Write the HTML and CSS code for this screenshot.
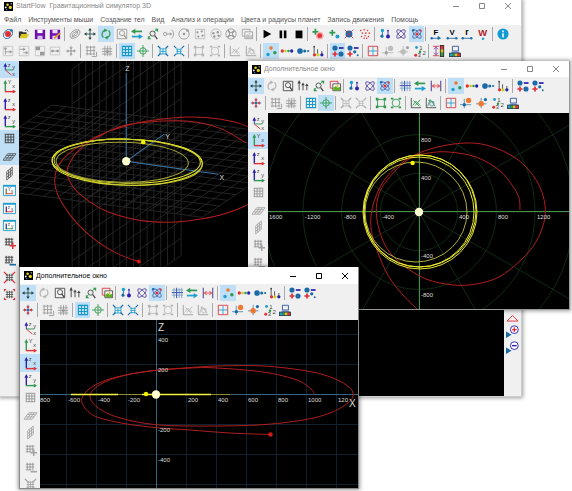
FILE: index.html
```
<!DOCTYPE html>
<html lang="ru">
    <head>
        <meta charset="utf-8">
        <title>StartFlow</title>
        <meta name="viewport" content="width=device-width, initial-scale=1">
        <link rel="stylesheet" href="styles.css">
        <script src="app.js" defer></script>
    </head>
    <body>
        <section class="window main">
            <header class="inactive">
                <svg class="logo"></svg>
                <h1>StartFlow&nbsp; Гравитационный симулятор 3D</h1>
                <div class="controls"></div>
            </header>
            <nav class="menu">
                <button>Файл</button>
                <button>Инструменты мыши</button>
                <button>Создание тел</button>
                <button>Вид</button>
                <button>Анализ и операции</button>
                <button>Цвета и радиусы планет</button>
                <button>Запись движения</button>
                <button>Помощь</button>
            </nav>
            <div class="bars">
                <div class="toolbar" data-tools="planet open save saveas | orbit:off move rotate:on loupe:off swap fit link:off circle:off box4:off ring4:off wheel:off frames:off | play pause stop | addsun addplanet cross cloud | levels atom atomred:on | force speed radius weight | info"></div>
                <div class="toolbar" data-tools="t1:off t2:off t3:off t4:off center:off | grid:off hash:off | gridblue:on target | shrinkbox shrinkring | rect:off round:off | graph:off graph2:off | scatter:on row3 row2 sticks | sizes:on sizes2 | quad axisbig:off axissmall:off nums | ruler palette"></div>
            </div>
            <div class="work">
                <div class="sidebar" data-tools="zyx:on yx zx zy sgrid:on flat:on wall wyx wzx wzy gridplus gridminus gridin gridout"></div>
                <svg class="plot" id="space" viewBox="20 61 484 335" preserveAspectRatio="xMinYMin slice"></svg>
                <div class="sidebar right" data-tools="camup camplus camminus"></div>
            </div>
        </section>

        <section class="window top">
            <header class="inactive">
                <svg class="logo"></svg>
                <h2>Дополнительное окно</h2>
                <div class="controls"></div>
            </header>
            <div class="bars">
                <div class="toolbar" data-tools="move:on rotate:off loupe arrows3 fit frames | levels atom atomred:on | gridfine swap between | scatter:on row3 row2 sticks | sizes sizes2"></div>
                <div class="toolbar" data-tools="center | grid:off hash:off | gridblue target:on | shrinkbox:off shrinkring:off | rect round | graph graph2 | quad axisbig axissmall nums palette"></div>
            </div>
            <div class="work">
                <div class="sidebar" data-tools="zyx yx:on zx zy sgrid:off flat:off wall:off gridplus:off gridminus:off"></div>
                <svg class="plot" id="polar" viewBox="268 113 301 196" preserveAspectRatio="xMinYMin slice"></svg>
            </div>
        </section>

        <section class="window front">
            <header>
                <svg class="logo"></svg>
                <h2>Дополнительное окно</h2>
                <div class="controls"></div>
            </header>
            <div class="bars">
                <div class="toolbar" data-tools="move:on rotate:off loupe arrows3 fit frames | levels atom atomred:on | gridfine swap between | scatter:on row3 row2 sticks | sizes sizes2"></div>
                <div class="toolbar" data-tools="center | grid:off hash:off | gridblue:on target | shrinkbox shrinkring | rect:off round:off | graph:off graph2:off | quad axisbig axissmall nums palette"></div>
            </div>
            <div class="work">
                <div class="sidebar" data-tools="zyx yx zx:on zy sgrid:off flat:off wall:off gridplus:off gridminus:off gridin:off"></div>
                <svg class="plot" id="side" viewBox="40 320 318 168" preserveAspectRatio="xMinYMin slice"></svg>
            </div>
        </section>
    </body>
</html>
```
FILE: styles.css
```
body {
    position: relative;
    height: 100vh;
    margin: 0;
    overflow: hidden;
    background-color: white;
    font-family: "Liberation Sans", Arial, sans-serif;
    font-size: 7px;
    color: #555;
}

button {
    padding: 0;
    border: 0;
    background: none;
    font: inherit;
    color: inherit;
}

.window {
    position: absolute;
    display: flex;
    flex-direction: column;
    box-sizing: border-box;
    overflow: hidden;
    background-color: #f0f0f0;
    box-shadow: 0 0 4px 1px rgba(0, 0, 0, .4);
}

.main {
    inset: 0 50px 94px 0;
    border-right: 1px solid #ccc;
    border-bottom: 1px solid #ccc;
}

.top {
    inset: 61px 2px 181px 248px;
    border-right: 1px solid #999;
    border-bottom: 1px solid #999;
}

.front {
    inset: 267px 213px 2px 19px;
    border: 1px solid #888;
    border-top: 0;
}

header {
    display: flex;
    align-items: center;
    height: 17px;
    background-color: white;
    color: black;
}

.top header {
    height: 16px;
}

.main header {
    height: 12px;
}

header.inactive {
    color: #888;
}

.logo {
    width: 9px;
    height: 9px;
    margin: 0 3px 0 4px;
    background-color: black;
}

h1,
h2 {
    flex: 1;
    margin: 0;
    font-size: 7px;
    line-height: 10px;
    font-weight: normal;
    white-space: nowrap;
}

.controls {
    display: flex;
}

.controls button {
    width: 26px;
    height: 10px;
}

.controls svg {
    display: block;
    width: 8px;
    height: 8px;
    margin: auto;
    fill: none;
    stroke: currentColor;
}

.menu {
    display: flex;
    gap: 7px;
    height: 13px;
    padding: 1px 4px 0;
    box-sizing: border-box;
    background-color: white;
    white-space: nowrap;
}

.bars {
    flex: none;
    padding-bottom: 1px;
}

.main .bars {
    padding-bottom: 2px;
}

.toolbar {
    display: flex;
    align-items: center;
    height: 17px;
}

.top .toolbar + .toolbar,
.front .toolbar + .toolbar {
    height: 18px;
}

.toolbar .tool {
    width: 16px;
    height: 16px;
}

.toolbar .tool:nth-child(3n) {
    width: 15px;
}

.tool {
    display: flex;
    flex: none;
    align-items: center;
    justify-content: center;
}

.tool svg {
    flex: none;
    width: 12px;
    height: 12px;
    overflow: visible;
    fill: none;
    stroke-width: 1;
}

.tool.off svg {
    filter: grayscale(1);
    opacity: .5;
}

.tool.on {
    background-color: #bfdff7;
}

.sep {
    width: 1px;
    height: 14px;
    margin: 0 2px 0 1px;
    background-color: #a8a8a8;
}

.work {
    display: flex;
    flex: 1;
    min-height: 0;
}

.sidebar {
    display: grid;
    grid-auto-rows: 17px 17px 18px;
    align-content: start;
    width: 20px;
    overflow: hidden;
}

.main .sidebar {
    width: 19px;
}

.sidebar .tool svg {
    width: 13px;
    height: 13px;
}

.top .sidebar {
    padding-top: 2px;
}

.main .sidebar.right {
    grid-auto-rows: 16px;
    align-content: end;
    width: 17px;
    padding-bottom: 41px;
}

.plot {
    flex: 1;
    min-width: 0;
    height: 100%;
    background-color: black;
    fill: none;
}

.plot text {
    fill: #ddd;
    font-size: 6px;
}

.plot .name {
    font-size: 7px;
}

#side .name {
    font-size: 10px;
}
```
FILE: app.js
```
const R = '#e03038', G = '#2f9a50', B = '#1a6aa8', P = '#2a20b0', K = '#444', O = '#f07830', C = '#20a0d0';

const line = (d, color, width = 1) => `<path d="${d}" stroke="${color}" stroke-width="${width}"/>`;
const dot = (x, y, r, color) => `<circle cx="${x}" cy="${y}" r="${r}" fill="${color}"/>`;
const ring = (x, y, r, color) => `<circle cx="${x}" cy="${y}" r="${r}" stroke="${color}"/>`;
const fill = (d, color) => `<path d="${d}" fill="${color}"/>`;
const letter = (x, y, text, color = K, size = 6, weight = 'normal') => `<text x="${x}" y="${y}" fill="${color}" font-size="${size}" font-weight="${weight}">${text}</text>`;

const mesh = 'M2.5 2V12M5.5 2V12M8.5 2V12M11.5 2V12M2 2.5H12M2 5.5H12M2 8.5H12M2 11.5H12';
const smallMesh = 'M3.5 2V10M6.5 2V10M9.5 2V10M2 3.5H11M2 6.5H11M2 9.5H8';
const atom = color => `<g stroke="${color}"><ellipse cx="7" cy="7" rx="6.5" ry="2.7" transform="rotate(45 7 7)"/><ellipse cx="7" cy="7" rx="6.5" ry="2.7" transform="rotate(-45 7 7)"/></g>`;
const corner = (up, side, a, b) => line('M2.5 12V2', up, 1.5) + fill('M.5 4L2.5 0L4.5 4Z', up) + line('M2 12.5H13', side, 1.5) + fill('M10.5 10.5L14 12.5L10.5 14.5Z', side) + letter(5, 4, a, K, 6) + letter(10, 9, b, K, 6);
const framed = (up, side, a, b) => `<path d="M.5 1.5H13.5V12.5H.5Z" fill="#fff" stroke="${C}"/>` + fill('M0 1H14V3H0Z', C) + line('M3.5 11V5M3 10.5H11', side) + line('M3.5 11V5', up) + letter(5, 8, a, K, 5) + letter(8.5, 9.5, b, K, 5);
const camera = sign => fill('M0 7L6 10.5L0 14Z', B) + `<circle cx="9" cy="5" r="4.2" fill="#fff" stroke="${P}"/>` + sign;

const icons = {
    planet: `<ellipse cx="7" cy="7" rx="6" ry="4.5" stroke="${B}" transform="rotate(-45 7 7)"/>` + dot(7, 7, 3.5, R) + dot(11, 3, 1.5, B),
    open: fill('M1 11V4H5L6 5H10V7H4L2 12Z', '#333') + fill('M2 12L4 7H13L10 12Z', '#d8c820') + line('M8 3Q10 1 12 4', K),
    save: fill('M1 2H13V13H1Z', '#7010b0') + fill('M4 2H10V6H4Z', '#fff') + fill('M4 9H10V13H4Z', '#d8c0e8'),
    saveas: fill('M1 2H13V13H1Z', '#7010b0') + fill('M4 2H10V6H4ZM4 9H10V13H4Z', '#e8d8f0') + line('M6 12L13 6', '#e0a020', 2),
    orbit: `<g stroke="${K}" transform="rotate(-35 7 7)"><ellipse cx="7" cy="7" rx="6.5" ry="4"/><ellipse cx="7" cy="7" rx="4" ry="2"/></g>` + line('M2 12L12 2', K),
    move: line('M7 2V12M2 7H12', '#244') + fill('M7 0L9 3H5ZM7 14L9 11H5ZM0 7L3 5V9ZM14 7L11 5V9Z', '#244'),
    rotate: line('M4 11A5 5 0 0 1 6 2.5M10 3A5 5 0 0 1 8 11.5', G, 1.5) + fill('M5 .5L9 2.5L5 5ZM9 9L5 11.5L9 13.5Z', G),
    loupe: line('M1.5 1.5H12.5V12.5H1.5Z', K) + `<circle cx="7" cy="6" r="3" stroke="${K}"/>` + line('M9 8L12 12', K, 1.5),
    swap: line('M3 4H13', G, 2) + fill('M5 1L0 4L5 7Z', G) + line('M1 10H11', C, 2) + fill('M9 7L14 10L9 13Z', C),
    fit: ring(6.5, 6.5, 3, K) + line('M9 9L12 13', K, 1.5) + line('M1 12L5 8M8 5L12 1', G) + fill('M9 1H13V5ZM1 9V13H5Z', G),
    link: ring(2.5, 7, 2, K) + line('M4 7H9', K) + fill('M8 5L11 7L8 9Z', K) + line('M10 2Q15 7 10 12', K),
    circle: ring(7, 7, 6, K) + dot(7, 7, 1.5, K) + dot(11, 3, 1.5, K),
    box4: line('M1.5 1.5H12.5V12.5H1.5Z', '#888') + dot(4, 5, 1.3, K) + dot(9, 4, 1.3, K) + dot(5, 10, 1.3, K) + dot(10, 9, 1.3, K),
    ring4: ring(7, 7, 6, '#888') + dot(4, 6, 1.4, K) + dot(9, 5, 1.4, K) + dot(5, 10, 1.4, K) + dot(10, 9, 1.4, K),
    wheel: ring(7, 7, 6, K) + ring(7, 7, 2, K) + line('M3 2L6 6M11 3L8 6M3 11L6 8M11 11L8 8', K, 2),
    frames: line('M1.5 1.5H10.5V9.5H1.5Z', R) + `<path d="M4.5 4.5H13.5V12.5H4.5Z" fill="#fff" stroke="${K}"/>` + fill('M5 12V9L8 7L10 9L13 8V12Z', '#60b020') + dot(10, 7, 1.2, '#e0b020'),
    play: fill('M3 2L12 7L3 12Z', '#000'),
    pause: fill('M3 3H6V12H3ZM8 3H11V12H8Z', '#000'),
    stop: fill('M3 3H11V12H3Z', '#000'),
    addsun: line('M4 1V8M.5 4.5H7.5', G, 2) + dot(9, 9, 4.5, '#f8b0b0') + dot(9, 9, 2.8, R),
    addplanet: line('M5 2V9M1.5 5.5H8.5', G, 2) + dot(11, 10, 2.3, C),
    cross: dot(7, 7, 4, B) + line('M2 2L12 12M12 2L2 12', '#b04060'),
    cloud: [[2, 3], [6, 2], [10, 3], [4, 6], [8, 6], [12, 6], [3, 10], [7, 9], [11, 10], [6, 12], [9, 12]].map(p => dot(...p, .9, R)).join(''),
    levels: line('M4 3V9', B) + dot(4, 3, 2, C) + dot(3.5, 9.5, 1.8, B) + line('M10.5 3V9', P) + dot(10.5, 3, 1, P) + dot(10.5, 10, 2.3, P),
    atom: atom('#5548a0'),
    atomred: atom('#4868b0') + dot(7, 7, 1.8, R) + dot(11, 3, 1.3, R) + dot(2.5, 2.5, 1.4, B),
    force: letter(4, 8, 'F', '#000', 9, 'bold') + line('M2 12H10', B) + dot(2, 12, 1.4, B) + fill('M9 9L13 12L9 14Z', B),
    speed: letter(4, 8, 'V', '#000', 9, 'bold') + line('M2 12H12', B) + dot(2, 12, 1.4, B) + dot(12, 12, 1.4, B),
    radius: letter(5, 8, 'r', '#000', 10, 'bold') + line('M2 12H12', B) + dot(2, 12, 1.4, B) + dot(12, 12, 1.4, B),
    weight: letter(1.5, 9, 'W', '#b02028', 11, 'bold') + dot(7, 12.5, 1.5, C),
    info: dot(7, 7, 6.5, '#109ad0') + line('M7 6V11M7 3V5', '#fff', 1.8),

    t1: line('M1.5 1.5H12.5V12.5H1.5Z', '#999') + dot(4, 4, 1.5, K) + line('M4 5V11M4 8H11', K) + fill('M9 6L12 8L9 10Z', K),
    t2: line('M1.5 1.5H12.5V12.5H1.5Z', '#999') + line('M2 5H7M6 9H11', K) + fill('M6 3L9 5L6 7ZM9 7L12 9L9 11Z', K),
    t3: line('M1.5 1.5H12.5V12.5H1.5Z', '#999') + fill('M2 2H7V6H2ZM7 8H12V12H7Z', K),
    t4: line('M1.5 2.5H12.5V11.5H1.5Z', '#999') + dot(4, 7, 1.6, K) + dot(10, 7, 1.6, K) + line('M4 7H10', K),
    center: line('M7 1V13M1 7H13', B) + fill('M7 5.5L5 2.5H9ZM7 8.5L5 11.5H9ZM5.5 7L2.5 5V9ZM8.5 7L11.5 5V9Z', R) + dot(7, 7, 1.3, B),
    grid: line('M2.5 1V12M6.5 1V12M10.5 1V12M1 2.5H12M1 6.5H12M1 10.5H12', K) + line('M8 13.5H13.5V8', K),
    hash: line('M4.5 1V13M7.5 1V13M10.5 1V13M1 4.5H13M1 7.5H13M1 10.5H13', K) + dot(7.5, 7.5, 1.8, K),
    gridblue: `<g transform="translate(7 7) scale(1.2) translate(-7 -7)">${line(mesh, '#1698c8')}</g>`,
    gridfine: line('M3.5 1V13M6.5 1V13M9.5 1V13M12.5 1V13M1 3.5H14M1 6.5H14M1 9.5H14', '#7aa0cc') + line('M6.5 1V13M1 6.5H14', '#4050b0'),
    target: ring(7, 7, 3.8, G) + line('M7 0V14M0 7H14', G),
    shrinkbox: line('M3.5 4.5H10.5V10.5H3.5ZM3.5 7.5H10.5M7 4.5V10.5', C) + line('M1 1L4 4M13 1L10 4M1 13L4 10M13 13L10 10', B, 1.5),
    shrinkring: line('M4 5H10M4 7.5H10M4 10H10M5 4V11M9 4V11', C) + line('M1 1L4 4M13 1L10 4M1 13L4 10M13 13L10 10', B, 1.2),
    rect: line('M3 3H11V11H3Z', G) + fill('M1 1H4V4H1ZM10 1H13V4H10ZM1 10H4V13H1ZM10 10H13V13H10Z', G),
    round: ring(7, 7, 4.5, G) + fill('M1 1H4V3H1ZM10 1H13V3H10ZM1 11H4V13H1ZM10 11H13V13H10Z', G),
    graph: line('M1.5 1V12.5H13', K) + line('M3 10L7 5L12 10M4 4L11 11M6 10L12 3', G),
    graph2: line('M1.5 1V12.5H13', K) + line('M3 11L6 3L12 11M4 4L11 6', G) + ring(8, 8, 2.5, '#58a'),
    scatter: dot(7, 3.5, 2.1, O) + dot(3.5, 11, 2, C) + dot(11.5, 9, 2, G),
    row3: dot(1.5, 7, 1.9, R) + dot(5.3, 7, 1.5, '#c8c820') + dot(8.8, 7, 1.5, G) + dot(12.5, 7, 1.9, P),
    row2: dot(3.5, 7, 3.3, B) + dot(9, 7, 1.8, B) + dot(13, 7, 1.3, B),
    sticks: line('M2.5 2V11M6.5 5V11M11.5 7V11', '#444') + dot(2.5, 2, 1, '#444') + dot(3, 11.5, 1.9, R) + dot(7, 11.5, 1.9, '#c8d820') + dot(11.5, 11.5, 1.9, P),
    sizes: dot(3.5, 3.5, 3, B) + line('M8 3.5H13.5', P, 2) + line('M.5 10.5H6.5M3.5 7.5V13.5', R, 2) + dot(10.5, 10.5, 3, B),
    sizes2: dot(3.5, 3.5, 3, B) + line('M8 3.5H13.5', P, 2) + line('M.5 10.5H6.5M3.5 7.5V13.5', R, 2) + dot(9, 8, 1.9, B) + dot(12.5, 12, 1.1, B),
    quad: line('M1.5 1.5H12.5V12.5H1.5Z', R) + line('M7 2V12M2 7H12', C),
    axisbig: line('M5 2V13M0 9H13', '#58a') + dot(10, 4, 3.1, O) + dot(5, 9, 2, B),
    axissmall: line('M6 1V13M0 8H12', '#58a') + dot(6, 8, 3.2, O) + dot(11, 3, 1.9, B),
    nums: dot(3, 3, 1.7, C) + letter(6, 6, '1', K, 7) + dot(7, 8, 1.5, G) + dot(2, 12, 1.7, R) + letter(4, 14, '3', K, 7) + letter(10, 12, '2', K, 7),
    ruler: line('M0 1.5H7M0 12.5H7', R) + line('M3.5 2V12M1 5L3.5 2.5L6 5M1 9L3.5 11.5L6 9', '#8040a0') + fill('M8 0H13V14H8Z', '#333') + fill('M9 1H12V5H9Z', R) + fill('M9 5H12V9H9Z', '#e0c020') + fill('M9 9H12V13H9Z', G),
    palette: line('M4 1.5H11V7H4ZM3 8.5H12', '#2a50a0') + fill('M0 9H14V14H0Z', '#345') + fill('M1 10H4V13H1Z', C) + fill('M4 10H7V13H4Z', G) + fill('M7 10H10V13H7Z', '#e0c020') + fill('M10 10H13V13H10Z', R),
    arrows3: line('M2.5 12V3M7 12V5M11.5 12V6', K, 1.1) + fill('M.5 4L2.5 0L4.5 4ZM5 6L7 3L9 6ZM9.5 7L11.5 4L13.5 7Z', K),
    between: line('M1.5 1V13M12.5 1V13', '#6058a0', 1.4) + line('M2 7H12M5.5 4.5L3 7L5.5 9.5M8.5 4.5L11 7L8.5 9.5', R),

    zyx: line('M2.5 8V2', P) + fill('M.5 4L2.5 0L4.5 4Z', P) + line('M2.5 7.5H11', G) + line('M3 8L9 13', R) + letter(5, 4, 'z', K, 6) + letter(10, 6, 'y', K, 6) + letter(10, 14, 'x', K, 6),
    yx: corner(G, R, 'Y', 'x'),
    zx: corner(P, R, 'z', 'x'),
    zy: corner(P, G, 'z', 'y'),
    sgrid: line(mesh, K),
    flat: line('M0 11H9L14 4H5ZM2 8.5H11M3.5 6H12.5M3 11L8 4M6 11L11 4', K, .8),
    wall: line('M4 5L10 0V9L4 14ZM4 8L10 3M4 11L10 6M6 3.5V12M8 2V10.5', K, .8),
    wyx: framed(G, R, 'Y', 'x'),
    wzx: framed(P, R, 'z', 'x'),
    wzy: framed(P, G, 'z', 'y'),
    gridplus: line(smallMesh, K) + line('M7 10.5H14M10.5 7V14', R, 1.6),
    gridminus: line(smallMesh, K) + line('M7 11.5H14', B, 1.8),
    gridin: line('M4.5 3V11M7 3V11M9.5 3V11M3 4.5H11M3 7H11M3 9.5H11', K, .8) + line('M1 1L4 4M13 1L10 4M1 13L4 10M13 13L10 10', R, 1.3),
    gridout: line('M4.5 3V11M7 3V11M9.5 3V11M3 4.5H11M3 7H11M3 9.5H11', K, .8) + fill('M1 1H4L1 4ZM13 1V4L10 1ZM1 13V10L4 13ZM13 13H10L13 10Z', R),
    camup: line('M1 13L7 7L13 13Z', R),
    camplus: camera(line('M6.5 5H11.5M9 2.5V7.5', R, 1.5)),
    camminus: camera(line('M6.5 5H11.5', P, 1.5)),
};

document.querySelectorAll('[data-tools]').forEach(bar => {
    bar.innerHTML = bar.dataset.tools.split(' ').map(tool => {
        if (tool === '|') return '<span class="sep"></span>';
        const [name, state = ''] = tool.split(':');
        return `<button class="tool ${state}" aria-label="${name}"><svg viewBox="0 0 14 14">${icons[name]}</svg></button>`;
    }).join('');
});

document.querySelectorAll('.logo').forEach(logo => {
    logo.setAttribute('viewBox', '0 0 10 10');
    logo.innerHTML = dot(4, 3, 1.4, '#e8d820') + dot(7, 6, 1.8, '#e8d820') + dot(2, 6, 1, '#fff') + dot(8, 2, .7, '#fff') + dot(3, 8.5, .8, '#3a8ad0');
});

document.querySelectorAll('.controls').forEach(controls => {
    controls.innerHTML = ['M1 4.5H7', 'M1.5 1.5H6.5V6.5H1.5Z', 'M1 1L7 7M7 1L1 7']
        .map((d, i) => `<button aria-label="${['Свернуть', 'Развернуть', 'Закрыть'][i]}"><svg viewBox="0 0 8 8"><path d="${d}"/></svg></button>`).join('');
});

// smooth curve through the points
const curve = (points, color, width = 1) => {
    let d = `M${points[0]}`;
    for (let i = 0; i < points.length - 1; i++) {
        const [a, b, c, e] = [points[i - 1] || points[i], points[i], points[i + 1], points[i + 2] || points[i + 1]];
        d += `C${b[0] + (c[0] - a[0]) / 6} ${b[1] + (c[1] - a[1]) / 6} ${c[0] - (e[0] - b[0]) / 6} ${c[1] - (e[1] - b[1]) / 6} ${c}`;
    }
    return line(d, color, width);
};
const oval = (x, y, rx, ry, color = '#e8e830', width = 1, turn = 0) => `<ellipse cx="${x}" cy="${y}" rx="${rx}" ry="${ry}" stroke="${color}" stroke-width="${width}" transform="rotate(${turn} ${x} ${y})"/>`;
const label = (x, y, text, name = '') => `<text class="${name}" x="${x}" y="${y}">${text}</text>`;
const SUN = '#ffffd0', TRAIL = '#b01e1e';

function drawSpace() {
    const gray = '#2a2a2a';
    let out = '';
    // horizontal plane
    const [a, b, c, d] = [[53, 105], [320, 138], [203, 217], [-62, 182]];
    const mix = (p, q, t) => [p[0] + (q[0] - p[0]) * t, p[1] + (q[1] - p[1]) * t];
    for (let i = 0; i <= 14; i++) out += line(`M${mix(a, d, i / 14)}L${mix(b, c, i / 14)}`, gray, .8);
    for (let i = 0; i <= 20; i++) out += line(`M${mix(a, b, i / 20)}L${mix(d, c, i / 20)}`, gray, .8);
    // vertical plane
    for (let i = 0; i <= 16; i++) {
        const x = 73 + i * 6.8;
        out += line(`M${x} ${69 - i * 4.7}V${330 - i * 4.7}`, gray, .8);
    }
    for (let i = 0; i <= 15; i++) out += line(`M73 ${69 + i * 17.4}L182 ${-6 + i * 17.4}`, gray, .8);
    out += line('M127 73V161L219 174M127 161L165 134', '#3a78a8');
    out += curve([[139, 261], [120, 254], [98, 241], [78, 223], [63, 203], [56, 185], [58, 168], [69, 154], [87, 142], [107, 132], [130, 125], [147, 121], [187, 117], [220, 119], [247, 126], [272, 142], [278, 165], [268, 190], [247, 205], [220, 215], [193, 220], [167, 222], [140, 220], [110, 212], [90, 201], [75, 188], [68, 173], [72, 160], [83, 147], [100, 136], [122, 126], [147, 122], [187, 121], [220, 128], [247, 143]], TRAIL);
    out += oval(128, 162, 75, 23, '#e8e830', 1, 1) + oval(127, 161, 74, 22, '#e8e830', 1, 1) + oval(129, 162, 74, 23, '#c8c828', 1, 2) + oval(123, 162, 66, 20, '#a8a838', 1, 1);
    out += dot(144, 142, 2.2, '#f4f400') + dot(127, 161, 4.2, SUN) + dot(139.5, 261, 2, '#d81818');
    out += label(126, 71, 'Z', 'name') + label(166, 139, 'Y', 'name') + label(220, 180, 'X', 'name');
    return out;
}

function drawPolar() {
    const x = 419, y = 212;
    let out = '';
    for (let i = 1; i <= 6; i++) out += ring(x, y, i * 38.7, '#122a14');
    for (let i = 0; i < 6; i++) {
        const t = i * Math.PI / 6, dx = Math.cos(t) * 250, dy = Math.sin(t) * 250;
        out += line(`M${x - dx} ${y - dy}L${x + dx} ${y + dy}`, '#122a14');
    }
    out += line(`M${x + .5} 100V320M260 ${y - .5}H580`, '#4a8f4a');
    out += curve([[520, 210], [519, 198], [512, 185], [499, 170], [476, 157], [449, 152], [429, 153], [409, 159], [388, 179], [378, 197], [377, 220], [386, 247], [403, 265], [426, 279], [453, 285], [476, 284], [499, 277], [521, 260], [536, 242], [544, 222], [545, 205], [539, 185], [526, 167], [509, 154], [486, 145], [466, 143], [442, 146], [419, 153], [400, 164], [383, 182], [373, 205], [371, 228], [378, 253], [389, 277], [403, 295], [419, 311]], TRAIL);
    out += oval(420, 212, 57, 57) + oval(419, 212, 55, 55) + oval(420, 211, 56, 56) + oval(416, 212, 51, 50, '#b0b040');
    out += dot(412.6, 163, 2.2, '#f4f400') + dot(x, 212, 4.2, SUN);
    out += label(269, 219, '1600') + label(305, 219, '-1200') + label(344, 219, '-800') + label(382, 219, '-400') + label(459, 219, '400') + label(498, 219, '800') + label(537, 219, '1200');
    out += label(421, 142, '800') + label(421, 180, '400') + label(421, 258, '-400') + label(421, 297, '-800');
    return out;
}

function drawSide() {
    let out = '';
    for (let x = 66.5; x < 360; x += 30) out += line(`M${x} 320V490`, '#0e2230');
    for (let y = 334.5; y < 490; y += 30) out += line(`M40 ${y}H360`, '#0e2230');
    out += line('M156.5 320V490M40 394.5H360', '#34647e');
    out += curve([[314, 395], [312, 390], [297, 380], [263, 372], [217, 368], [190, 368], [150, 371], [122, 376], [101, 384], [90, 395], [97, 407], [117, 417], [150, 424], [190, 426], [257, 425], [303, 420], [330, 413], [348, 403], [353, 395], [349, 387], [333, 378], [307, 371], [263, 366], [217, 366], [185, 368], [150, 371], [113, 378], [92, 387], [82, 398], [85, 408], [97, 417], [127, 424], [160, 428], [190, 430], [230, 433], [270, 434.5]], TRAIL);
    out += line('M71 394.5H118M142 394.5H211', '#f0f040', 1.4) + line('M118 394.5H142M211 394.5H230', '#908c30');
    out += dot(146, 394, 2.2, '#f4f400') + dot(156, 394.5, 4.2, SUN) + dot(270.5, 434.5, 2.2, '#d81818');
    ['800', '-600', '-400', '-200', '', '200', '400', '600', '800', '1000', '120'].forEach((text, i) => out += label(38 + i * 30 + (i ? 0 : 2), 402, text));
    ['400', '200', '', '-200', '-400', '-600'].forEach((text, i) => out += label(158, 342 + i * 30, text));
    return out + label(158, 331, 'Z', 'name') + label(349, 407, 'X', 'name');
}

document.getElementById('space').innerHTML = drawSpace();
document.getElementById('polar').innerHTML = drawPolar();
document.getElementById('side').innerHTML = drawSide();
```
